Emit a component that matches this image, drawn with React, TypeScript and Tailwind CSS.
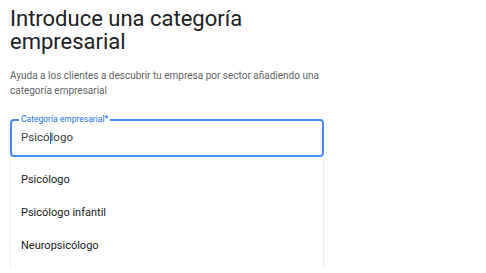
import React from 'react';

const suggestions = ['Psicólogo', 'Psicólogo infantil', 'Neuropsicólogo'];

export default function App() {
  return (
    <div className="w-[486px] h-[273px] overflow-hidden bg-white font-['Roboto',sans-serif]">
      <div className="pl-[10px] pt-[7px] w-[324px]">
        {/* Title */}
        <h1 className="text-[22px] leading-[23px] text-[#202124] font-normal w-[314px]">
          Introduce una categoría empresarial
        </h1>

        <p className="mt-[15px] w-[320px] text-[10px] leading-[15px] text-[#5f6368]">
          Ayuda a los clientes a descubrir tu empresa por sector añadiendo una categoría empresarial
        </p>

        {/* Outlined field */}
        <div className="relative mt-[21px] w-[314px] h-[38px] rounded-[4px] border-2 border-[#4a89f3] flex items-center pl-[9px]">
          <span className="absolute left-[7px] top-[-7px] bg-white px-[2px] text-[8.5px] leading-[11px] text-[#1a73e8]">
            Categoría empresarial*
          </span>
          <span className="text-[11.5px] text-[#3c4043] flex items-center">
            Psicó
            <span className="inline-block w-px h-[12px] bg-[#1a73e8]" />
            logo
          </span>
        </div>

        {/* Suggestions */}
        <ul className="mt-[3px] w-[314px] py-[4px] border-x border-[#ececec]">
          {suggestions.map((s) => (
            <li key={s} className="h-[33px] flex items-center pl-[10px] text-[11px] text-[#202124]">
              {s}
            </li>
          ))}
        </ul>
      </div>
    </div>
  );
}
